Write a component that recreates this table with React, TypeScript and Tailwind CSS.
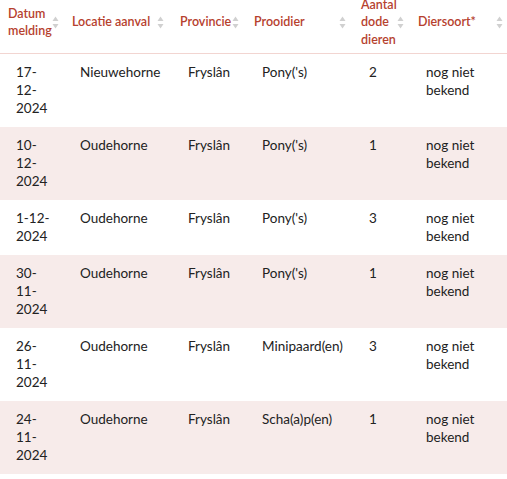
import React from "react";

const cols = "grid grid-cols-[64px_108px_74px_107px_57px_97px]";

type Row = { date: string[]; loc: string; prov: string; prey: string; n: string; kind: string[]; pink: boolean };

const rows: Row[] = [
  { date: ["17-", "12-", "2024"], loc: "Nieuwehorne", prov: "Fryslân", prey: "Pony('s)", n: "2", kind: ["nog niet", "bekend"], pink: false },
  { date: ["10-", "12-", "2024"], loc: "Oudehorne", prov: "Fryslân", prey: "Pony('s)", n: "1", kind: ["nog niet", "bekend"], pink: true },
  { date: ["1-12-", "2024"], loc: "Oudehorne", prov: "Fryslân", prey: "Pony('s)", n: "3", kind: ["nog niet", "bekend"], pink: false },
  { date: ["30-", "11-", "2024"], loc: "Oudehorne", prov: "Fryslân", prey: "Pony('s)", n: "1", kind: ["nog niet", "bekend"], pink: true },
  { date: ["26-", "11-", "2024"], loc: "Oudehorne", prov: "Fryslân", prey: "Minipaard(en)", n: "3", kind: ["nog niet", "bekend"], pink: false },
  { date: ["24-", "11-", "2024"], loc: "Oudehorne", prov: "Fryslân", prey: "Scha(a)p(en)", n: "1", kind: ["nog niet", "bekend"], pink: true },
];

function SortIcon() {
  return (
    <svg width="7" height="13" viewBox="0 0 7 13" className="shrink-0 block">
      <path d="M3.5 0.5 L6.5 5 L0.5 5 Z" fill="#d0d0d0" />
      <path d="M3.5 12.5 L6.5 8 L0.5 8 Z" fill="#d0d0d0" />
    </svg>
  );
}

function Head({ lines, pr = "pr-[7px]" }: { lines: string[]; pr?: string }) {
  return (
    <div className={`flex items-center pl-2 ${pr}`}>
      <div className="font-semibold text-[#b6412e] text-[12.5px] leading-[17.5px]">
        {lines.map((l, i) => (
          <div key={i}>{l}</div>
        ))}
      </div>
      <div className="ml-auto">
        <SortIcon />
      </div>
    </div>
  );
}

function Lines({ lines }: { lines: string[] }) {
  return (
    <div>
      {lines.map((l, i) => (
        <div key={i}>{l}</div>
      ))}
    </div>
  );
}

export default function App() {
  return (
    <div
      className="w-[507px] h-[479px] overflow-hidden bg-white text-[13.5px] leading-[18px] text-[#222222]"
      style={{ fontFamily: "Lato, 'Open Sans', sans-serif" }}
    >
      <div className={`${cols} -mt-[5px] h-[59px] pb-[4px] border-b border-[#f2d5d1]`}>
        <Head lines={["Datum", "melding"]} />
        <Head lines={["Locatie aanval"]} pr="pr-[8px]" />
        <Head lines={["Provincie"]} pr="pr-[7px]" />
        <Head lines={["Prooidier"]} pr="pr-[7px]" />
        <Head lines={["Aantal", "dode", "dieren"]} pr="pr-[8px]" />
        <Head lines={["Diersoort*"]} pr="pr-[4px]" />
      </div>
      {rows.map((r, i) => (
        <div key={i} className={`${cols} pt-[9px] pb-[10px] ${r.pink ? "bg-[#f7ebea]" : "bg-white"}`}>
          <div className="pl-4">
            <Lines lines={r.date} />
          </div>
          <div className="pl-4">{r.loc}</div>
          <div className="pl-4">{r.prov}</div>
          <div className="pl-4">{r.prey}</div>
          <div className="pl-4">{r.n}</div>
          <div className="pl-4">
            <Lines lines={r.kind} />
          </div>
        </div>
      ))}
    </div>
  );
}
